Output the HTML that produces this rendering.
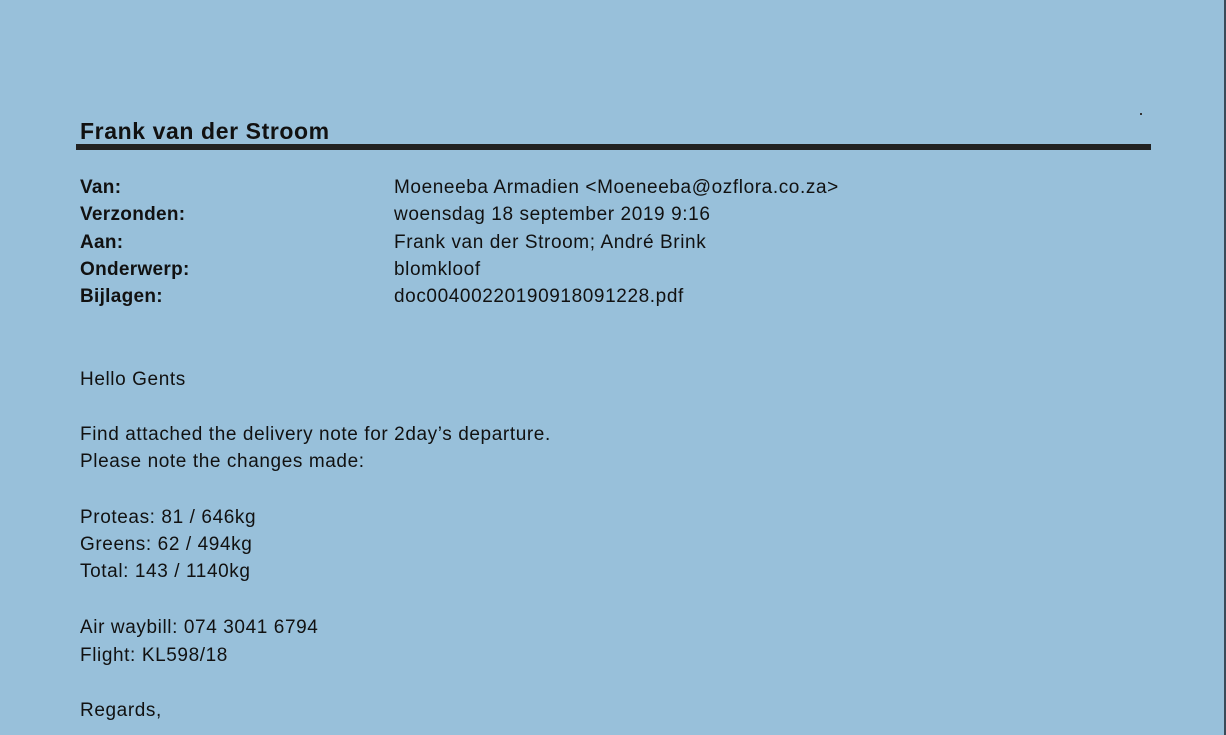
<!DOCTYPE html>
<html><head><meta charset="utf-8">
<style>
html,body{margin:0;padding:0;}
body{width:1226px;height:735px;background:#98c0da;position:relative;overflow:hidden;font-family:"Liberation Sans",sans-serif;color:#111;}
.t{position:absolute;white-space:nowrap;font-size:19px;line-height:20px;letter-spacing:0.6px;}
.b{font-weight:bold;letter-spacing:0.3px;}
#title{position:absolute;left:80px;top:118px;font-size:23px;font-weight:bold;letter-spacing:0.6px;color:#111;}
#rule{position:absolute;left:76px;top:144px;width:1075px;height:6px;background:#222;}
#edge{position:absolute;left:1224px;top:0;width:2px;height:735px;background:#3a4a58;}
#dot{position:absolute;left:1140px;top:113px;width:2px;height:2px;background:#333;}
</style></head><body>
<div id="title">Frank van der Stroom</div>
<div id="rule"></div>
<div id="edge"></div>
<div id="dot"></div>
<div class="t b" style="left:80px;top:178px">Van:</div>
<div class="t b" style="left:80px;top:205px">Verzonden:</div>
<div class="t b" style="left:80px;top:233px">Aan:</div>
<div class="t b" style="left:80px;top:260px">Onderwerp:</div>
<div class="t b" style="left:80px;top:287px">Bijlagen:</div>
<div class="t" style="left:394px;top:178px">Moeneeba Armadien &lt;Moeneeba@ozflora.co.za&gt;</div>
<div class="t" style="left:394px;top:205px">woensdag 18 september 2019 9:16</div>
<div class="t" style="left:394px;top:233px">Frank van der Stroom; André Brink</div>
<div class="t" style="left:394px;top:260px">blomkloof</div>
<div class="t" style="left:394px;top:287px">doc00400220190918091228.pdf</div>
<div class="t" style="left:80px;top:370px">Hello Gents</div>
<div class="t" style="left:80px;top:425px">Find attached the delivery note for 2day’s departure.</div>
<div class="t" style="left:80px;top:452px">Please note the changes made:</div>
<div class="t" style="left:80px;top:508px">Proteas: 81 / 646kg</div>
<div class="t" style="left:80px;top:535px">Greens: 62 / 494kg</div>
<div class="t" style="left:80px;top:562px">Total: 143 / 1140kg</div>
<div class="t" style="left:80px;top:618px">Air waybill: 074 3041 6794</div>
<div class="t" style="left:80px;top:646px">Flight: KL598/18</div>
<div class="t" style="left:80px;top:701px">Regards,</div>
</body></html>
